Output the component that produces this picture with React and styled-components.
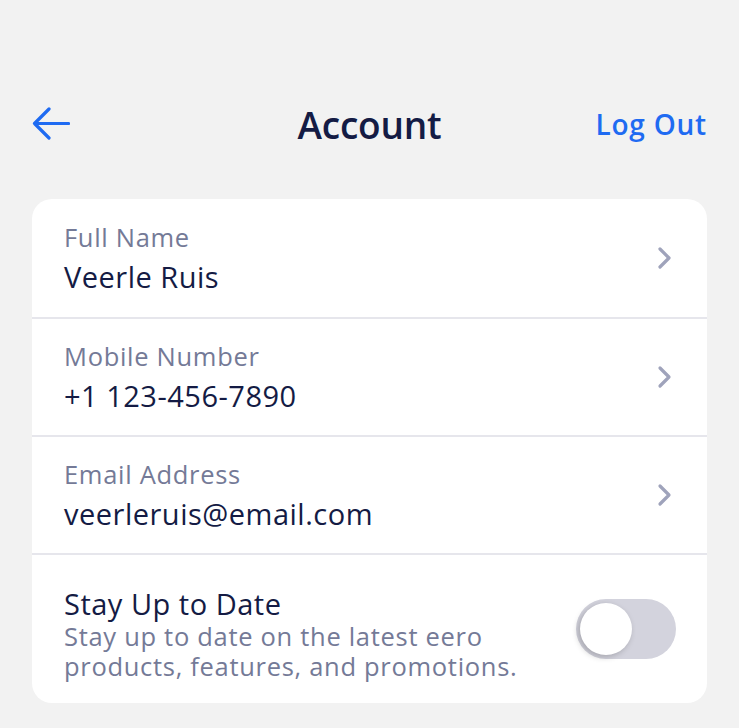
import React, { useState } from "react";
import styled, { createGlobalStyle } from "styled-components";

const Global = createGlobalStyle`
  html, body {
    margin: 0;
    background: #f2f2f2;
  }
  body {
    font-family: "Open Sans", "Noto Sans", sans-serif;
    -webkit-font-smoothing: antialiased;
  }
`;

const Page = styled.div`
  width: 739px;
  height: 728px;
  box-sizing: border-box;
  padding: 95px 32px 0;
  overflow: hidden;
`;

const Header = styled.header`
  display: grid;
  grid-template-columns: 1fr auto 1fr;
  align-items: center;
  height: 58px;
  margin-bottom: 46px;
`;

const Back = styled.button`
  justify-self: start;
  display: flex;
  align-items: center;
  padding: 0;
  border: 0;
  background: none;
  color: #1f6bf2;
  cursor: pointer;
`;

const Title = styled.h1`
  margin: 0;
  font-size: 37px;
  font-weight: 600;
  color: #141b44;
  letter-spacing: -0.2px;
`;

const LogOut = styled.button`
  justify-self: end;
  padding: 0;
  border: 0;
  background: none;
  font: inherit;
  font-size: 28px;
  font-weight: 600;
  letter-spacing: 0.8px;
  color: #1f6bf2;
  cursor: pointer;
`;

const Card = styled.section`
  background: #fff;
  border-radius: 20px;
  overflow: hidden;
`;

const Row = styled.div`
  display: flex;
  align-items: center;
  justify-content: space-between;
  box-sizing: border-box;
  height: ${(p) => (p.$tall ? "150px" : "118px")};
  padding: 0 31px 0 32px;
  border-top: ${(p) => (p.$first ? "none" : "2px solid #e6e6ec")};
`;

const Text = styled.div`
  display: flex;
  flex-direction: column;
  margin-top: ${(p) => (p.$shift ? "12px" : "0")};
`;

const Label = styled.span`
  font-size: 25.5px;
  letter-spacing: 0.7px;
  color: #747a97;
  line-height: 30px;
`;

const Value = styled.span`
  font-size: 29px;
  letter-spacing: 0.5px;
  color: #141b44;
  line-height: ${(p) => (p.$gap ? "36px" : "30px")};
  margin-top: ${(p) => (p.$gap ? "7px" : "0")};
`;

const Desc = styled.span`
  font-size: 25.5px;
  letter-spacing: 0.7px;
  color: #747a97;
  line-height: 30px;
  margin-top: 2px;
`;

const Toggle = styled.button`
  position: relative;
  width: 100px;
  height: 60px;
  border-radius: 30px;
  border: 0;
  padding: 0;
  background: ${(p) => (p.$on ? "#1f6bf2" : "#d3d3dd")};
  cursor: pointer;
  flex-shrink: 0;
`;

const Knob = styled.span`
  position: absolute;
  top: 4px;
  left: ${(p) => (p.$on ? "42px" : "4px")};
  width: 52px;
  height: 52px;
  border-radius: 50%;
  background: #fff;
  box-shadow: -2px 2px 6px rgba(0, 0, 0, 0.22);
  transition: left 0.2s;
`;

const ChevronWrap = styled.span`
  display: flex;
  margin-right: 3px;
`;

const Chevron = () => (
  <ChevronWrap>
    <svg width="16" height="24" viewBox="0 0 16 24" fill="none">
      <path d="M3 3l9 9-9 9" stroke="#9fa3bb" strokeWidth="3.2" strokeLinecap="round" strokeLinejoin="round" />
    </svg>
  </ChevronWrap>
);

const fields = [
  { label: "Full Name", value: "Veerle Ruis" },
  { label: "Mobile Number", value: "+1 123-456-7890" },
  { label: "Email Address", value: "veerleruis@email.com" },
];

export default function App() {
  const [on, setOn] = useState(false);
  return (
    <Page>
      <Global />
      <Header>
        <Back aria-label="Back">
          <svg width="38" height="34" viewBox="0 0 38 34" fill="none">
            <path d="M36.5 16.5H2.5M17 2L2.5 16.5 17 31" stroke="currentColor" strokeWidth="3.2" strokeLinecap="round" strokeLinejoin="round" />
          </svg>
        </Back>
        <Title>Account</Title>
        <LogOut>Log Out</LogOut>
      </Header>
      <Card>
        {fields.map((f, i) => (
          <Row key={f.label} $first={i === 0}>
            <Text>
              <Label>{f.label}</Label>
              <Value $gap>{f.value}</Value>
            </Text>
            <Chevron />
          </Row>
        ))}
        <Row $tall>
          <Text $shift>
            <Value>Stay Up to Date</Value>
            <Desc>
              Stay up to date on the latest eero
              <br />
              products, features, and promotions.
            </Desc>
          </Text>
          <Toggle $on={on} onClick={() => setOn(!on)} aria-label="Stay Up to Date">
            <Knob $on={on} />
          </Toggle>
        </Row>
      </Card>
    </Page>
  );
}
